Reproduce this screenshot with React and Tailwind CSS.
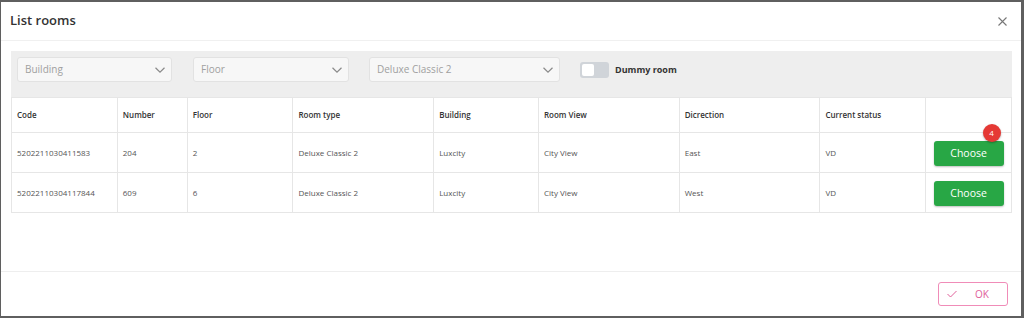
import React from 'react';

const cols = [
  { key: 'code', label: 'Code', w: 'w-[106px]' },
  { key: 'number', label: 'Number', w: 'w-[70px]' },
  { key: 'floor', label: 'Floor', w: 'w-[106px]' },
  { key: 'type', label: 'Room type', w: 'w-[141px]' },
  { key: 'building', label: 'Building', w: 'w-[105px]' },
  { key: 'view', label: 'Room View', w: 'w-[141px]' },
  { key: 'dir', label: 'Dicrection', w: 'w-[141px]' },
  { key: 'status', label: 'Current status', w: 'w-[106px]' },
  { key: 'action', label: '', w: 'w-[86px]' },
];

const rows = [
  { code: '5202211030411583', number: '204', floor: '2', type: 'Deluxe Classic 2', building: 'Luxcity', view: 'City View', dir: 'East', status: 'VD', badge: 4 },
  { code: '52022110304117844', number: '609', floor: '6', type: 'Deluxe Classic 2', building: 'Luxcity', view: 'City View', dir: 'West', status: 'VD' },
];

const Chevron = () => (
  <svg width="12" height="12" viewBox="0 0 12 12" fill="none" stroke="#8a8a8a" strokeWidth="1.2">
    <path d="M1.5 3.8 L6 8.2 L10.5 3.8" />
  </svg>
);

const Select = ({ label, w }) => (
  <div className={`${w} h-[25px] bg-[#f7f7f7] border border-[#e2e2e2] rounded-[3px] flex items-center justify-between pl-[7px] pr-[5px]`}>
    <span className="text-[10px] text-[#a0a0a0]">{label}</span>
    <Chevron />
  </div>
);

export default function App() {
  return (
    <div className="w-[1024px] h-[318px] bg-[#5f5f5f] pt-[2px] pl-[1px] pr-[3px] pb-[2px]" style={{ fontFamily: '"Open Sans", "Noto Sans", sans-serif' }}>
      <div className="h-full bg-white flex flex-col">
        <div className="h-[39px] flex items-center justify-between pl-[9px] pr-[14px] border-b border-[#f0f0f0]">
          <span className="text-[13px] font-semibold text-[#333]">List rooms</span>
          <svg width="9" height="9" viewBox="0 0 9 9" stroke="#777" strokeWidth="1.1">
            <path d="M0.5 0.5 L8.5 8.5 M8.5 0.5 L0.5 8.5" />
          </svg>
        </div>

        <div className="flex-1 pt-[10px] pl-[10px] pr-[9px]">
          <div className="bg-[#eeeeee] h-[46px] flex items-start pt-[6px] pl-[6px]">
            <Select label="Building" w="w-[155px]" />
            <div className="w-[21px]" />
            <Select label="Floor" w="w-[156px]" />
            <div className="w-[20px]" />
            <Select label="Deluxe Classic 2" w="w-[191px]" />
            <div className="ml-[20px] mt-[5px] flex items-center">
              <div className="w-[29px] h-[16px] rounded-[3px] bg-[#d0d4d9] p-[2px]">
                <div className="w-[12px] h-[12px] rounded-[2px] bg-white" />
              </div>
              <span className="ml-[6px] text-[9px] font-bold text-[#333]">Dummy room</span>
            </div>
          </div>

          <div className="border-l border-t border-[#e6e6e6] flex flex-col">
            <div className="flex h-[35px]">
              {cols.map((c) => (
                <div key={c.key} className={`${c.w} border-r border-b border-[#e6e6e6] flex items-center pl-[5px] text-[8px] font-semibold text-[#333]`}>
                  {c.label}
                </div>
              ))}
            </div>
            {rows.map((r, i) => (
              <div key={i} className="flex h-[40px]">
                {cols.map((c) =>
                  c.key === 'action' ? (
                    <div key={c.key} className={`${c.w} border-r border-b border-[#e6e6e6] flex items-center justify-center`}>
                      <div className="relative">
                        <button className="w-[70px] h-[25px] bg-[#28a745] rounded-[3px] text-white text-[10.5px] shadow-[0_1px_2px_rgba(0,0,0,0.25)]">
                          Choose
                        </button>
                        {r.badge && (
                          <span className="absolute -top-[15px] right-[3px] w-[18px] h-[18px] rounded-full bg-[#e53935] text-white text-[8px] flex items-center justify-center shadow-[0_1px_2px_rgba(0,0,0,0.3)]">
                            {r.badge}
                          </span>
                        )}
                      </div>
                    </div>
                  ) : (
                    <div key={c.key} className={`${c.w} border-r border-b border-[#e6e6e6] flex items-center pl-[5px] text-[8px] text-[#555]`}>
                      {r[c.key]}
                    </div>
                  )
                )}
              </div>
            ))}
          </div>
        </div>

        <div className="h-[45px] border-t border-[#eeeeee] flex items-center justify-end pr-[13px]">
          <button className="w-[70px] h-[24px] border border-[#f08cb8] rounded-[3px] flex items-center pl-[8px] text-[10px] text-[#e0609a]">
            <svg width="10" height="8" viewBox="0 0 10 8" fill="none" stroke="#e0609a" strokeWidth="1">
              <path d="M0.5 4 L3.5 7 L9.5 1" />
            </svg>
            <span className="ml-[18px]">OK</span>
          </button>
        </div>
      </div>
    </div>
  );
}
